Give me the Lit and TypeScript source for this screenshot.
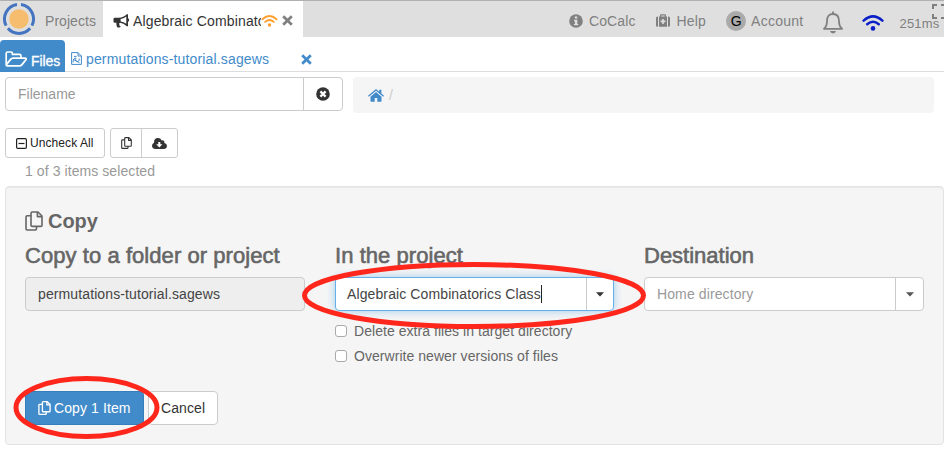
import { LitElement, html, svg, css } from "lit";
import { customElement } from "lit/decorators.js";

const icon = (cls: string, w: number, h: number, box: string, body: unknown) =>
  html`<svg class="icon ${cls}" width=${w} height=${h} viewBox=${box} aria-hidden="true">${body}</svg>`;

const copyIcon = (w: number, h: number, sw: number) =>
  icon("", w, h, "0 0 18 20", svg`
    <g fill="none" stroke="currentColor" stroke-width=${sw} stroke-linejoin="round">
      <path d="M6.2 4.8H2.2Q1 4.8 1 6V17.8Q1 19 2.2 19H10.3Q11.5 19 11.5 17.8V15.4"/>
      <path d="M7.2 1H13L17 5V14.2Q17 15.4 15.8 15.4H7.2Q6 15.4 6 14.2V2.2Q6 1 7.2 1Z"/>
      <path d="M12.4 1V5.6H17"/>
    </g>`);

const wifi = (cls: string, w: number, h: number) =>
  icon(cls, w, h, "0 0 22 16", svg`
    <g fill="none" stroke="currentColor" stroke-width="2.5" stroke-linecap="round">
      <path d="M1.6 5.6Q11 -2.8 20.4 5.6"/>
      <path d="M5.2 9.2Q11 4.2 16.8 9.2"/>
    </g>
    <circle cx="11" cy="13.4" r="2.3" fill="currentColor"/>`);

const cross = (cls: string, s: number) =>
  icon(cls, s, s, "0 0 10 10", svg`<path d="M1.1 1.1L8.9 8.9M8.9 1.1L1.1 8.9" stroke="currentColor" stroke-width="2.5"/>`);

@customElement("top-bar")
export class TopBar extends LitElement {
  static styles = css`
    :host { display: flex; height: 37px; box-sizing: border-box; border-top: 1px solid #b0b0b0;
      background: #dfdfdf; color: #808080; font-size: 14px; line-height: 40px; }
    .icon { display: block; flex: none; }
    .brand { display: flex; width: 103px; }
    .logo { margin: 1px 0 0 2px; }
    .projects { margin-left: 9px; letter-spacing: .05px; }
    .tab { display: flex; width: 200px; background: #fff; color: #333; white-space: nowrap; }
    .horn { margin: 13px 0 0 10px; }
    .title { width: 128px; margin-left: 4px; overflow: hidden; letter-spacing: .15px; }
    .orange { color: #ff9f2e; margin-top: 14px; }
    .close { color: #808080; margin: 14px 0 0 4px; }
    .right { display: flex; flex: 1; padding-left: 266px; position: relative; white-space: nowrap; }
    .info { margin: 13px 6px 0 0; }
    .cocalc { letter-spacing: .1px; }
    .kit { margin: 13px 7px 0 20px; }
    .help { letter-spacing: .2px; }
    .avatar { width: 20px; height: 20px; line-height: 20px; margin: 10px 5px 0 20px; border-radius: 50%;
      background: #aaa; color: #000; text-align: center; }
    .account { letter-spacing: .25px; }
    .bell { margin: 10px 0 0 20px; }
    .blue { color: #0a1fc8; margin: 14px 0 0 19px; }
    .ping { margin-left: 15px; line-height: 46px; font-size: 13px; letter-spacing: .2px; }
    .expand { position: absolute; top: 3px; right: 0; }
  `;
  render() {
    return html`
      <div class="brand">
        ${icon("logo", 34, 34, "0 0 34 34", svg`
          <circle cx="17" cy="17" r="9.8" fill="#f6bd6f"/>
          <g fill="none" stroke="#4474c0" stroke-width="3">
            <path d="M19 2.6A14.5 14.5 0 0 1 29.9 23.6"/>
            <path d="M28.1 26.3A14.5 14.5 0 0 1 5.9 26.3"/>
            <path d="M4.1 23.6A14.5 14.5 0 0 1 15 2.6"/>
          </g>`)}
        <span class="projects">Projects</span>
      </div>
      <div class="tab">
        ${icon("horn", 16, 14, "0 0 16 14", svg`
          <path fill="currentColor" fill-rule="evenodd" d="M15 .2V4.4A1.6 1.6 0 0 1 15 7.6V12.2H13.8Q10.4 9.2 7 8.8Q5.6 9.4 6.5 10.8Q6 11.6 8 12.8Q6.5 14.2 4.2 13.2Q3 10.8 3.5 8.7H1.8Q.5 8.7 .5 7.4V5Q.5 3.7 1.8 3.7H6Q10.4 3.6 13.8 .2ZM13.3 2.6Q10.5 4.8 7.6 5.1V7.4Q10.5 7.7 13.3 9.8Z"/>`)}
        <span class="title">Algebraic Combinatorics</span>
        ${wifi("orange", 17, 12)}${cross("close", 11)}
      </div>
      <div class="right">
        ${icon("info", 14, 14, "0 0 14 14", svg`<circle cx="7" cy="7" r="6.8" fill="currentColor"/>
          <path fill="#dfdfdf" d="M5.8 2.5h2.5v2H5.8zM5 5.8h3.3v4.1h1v1.4H4.9V9.9h1V7.2H5z"/>`)}
        <span class="cocalc">CoCalc</span>
        ${icon("kit", 14, 13, "0 0 14 13", svg`<path fill="currentColor" fill-rule="evenodd" d="M4 2.5V1Q4 .2 5 .2H9Q10 .2 10 1V2.5H11V12.8H3V2.5ZM5.2 2.5H8.8V1.4H5.2ZM6.2 5V6.6H4.6V8.3H6.2V10H7.8V8.3H9.4V6.6H7.8V5ZM2 2.5V12.8H1.5Q0 12.8 0 11.4V4Q0 2.5 1.5 2.5ZM12 2.5V12.8H12.5Q14 12.8 14 11.4V4Q14 2.5 12.5 2.5Z"/>`)}
        <span class="help">Help</span>
        <span class="avatar">G</span>
        <span class="account">Account</span>
        ${icon("bell", 20, 23, "0 0 20 23", svg`
          <path fill="none" stroke="currentColor" stroke-width="1.8" stroke-linejoin="round" d="M1 17.8Q4 15.3 4 10Q4 3 10 3Q16 3 16 10Q16 15.3 19 17.8Z"/>
          <path fill="currentColor" d="M9.1 .4h1.8V3H9.1zM7 20H13Q12.5 22.4 10 22.4Q7.5 22.4 7 20Z"/>`)}
        ${wifi("blue", 22, 16)}
        <span class="ping">251ms</span>
        ${icon("expand", 12, 15, "0 0 12 15", svg`<path fill="none" stroke="currentColor" stroke-width="2" d="M5 1H1V5M9 1H13M1 10V14H5M9 14H13"/>`)}
      </div>`;
  }
}

@customElement("file-tabs")
export class FileTabs extends LitElement {
  static styles = css`
    :host { display: flex; box-sizing: border-box; height: 32px; margin-top: 3px; border-bottom: 1px solid #ddd; color: #428bca; }
    .icon { display: block; flex: none; }
    .files { display: flex; width: 65px; height: 32px; background: #428bca; color: #fff;
      border-radius: 4px 4px 0 0; line-height: 42px; font-size: 14px; }
    .folder { margin: 11px 4px 0 5px; }
    .files span { letter-spacing: -.1px; -webkit-text-stroke: .3px #fff; }
    .page { margin: 12px 4px 0 6px; }
    .name { width: 215px; line-height: 38px; font-size: 14px; letter-spacing: .15px; }
    .x { margin-top: 14px; }
  `;
  render() {
    return html`
      <div class="files">
        ${icon("folder", 22, 16, "0 0 22 16", svg`<path fill="none" stroke="currentColor" stroke-width="1.7" stroke-linejoin="round" d="M1.2 14V2.4Q1.2 1 2.6 1H6Q7.4 1 7.4 2.4V3.4H14.4Q16 3.4 16 5V7M1.2 14Q1.2 14.8 2.2 14.8H14.5Q16 14.8 17 13.6L21 8.6Q21.8 7.2 20 7.2H8Q6.6 7.2 5.6 8.4L1.6 13.4"/>`)}
        <span>Files</span>
      </div>
      ${icon("page", 11, 13, "0 0 11 13", svg`<path fill="none" stroke="currentColor" d="M.6 .6H7L10.4 4V12.4H.6ZM7 .6V4H10.4"/>
        <path fill="none" stroke="currentColor" stroke-width="1" d="M2 10.5Q2.5 5.2 5 6.2Q3.6 9 6.5 9.5Q9 9 8.2 6.5M2.4 7.5L8.5 10.8M3 4.4H5.6"/>`)}
      <span class="name">permutations-tutorial.sagews</span>
      ${cross("x", 11)}`;
  }
}

@customElement("copy-panel")
export class CopyPanel extends LitElement {
  static styles = css`
    :host { display: block; position: relative; box-sizing: border-box; height: 259px; margin: 6px 0 0 5px; padding: 21px 19px 0;
      background: #f5f5f5; border: 1px solid #e3e3e3; border-radius: 4px; box-shadow: inset 0 1px 1px rgba(0,0,0,.05); color: #666; }
    .icon { display: block; flex: none; }
    h3, h4 { margin: 0; font-size: 20px; line-height: 26px; white-space: nowrap; }
    h3 { display: flex; align-items: center; gap: 5px; letter-spacing: -.05px; }
    h4 { font-weight: 400; font-size: 22px; -webkit-text-stroke: .6px #666; line-height: 26px; margin: 9px 0 8px; }
    .wide { letter-spacing: .06px; }
    .cols { display: grid; grid-template-columns: 280px 279px 280px; column-gap: 30px; }
    .field { display: flex; box-sizing: border-box; height: 34px; border: 1px solid #ccc; border-radius: 4px;
      background: #fff; color: #555; font-size: 14px; line-height: 32px; padding-left: 12px; letter-spacing: .11px; }
    .off { background: #eee; color: #444; }
    .focus { padding-left: 11px; border-color: #66afe9; box-shadow: 0 0 8px rgba(102,175,233,.6); color: #444; }
    .hint { color: #999; }
    .text { flex: 1; white-space: nowrap; }
    .caret { display: inline-block; width: 1px; height: 18px; background: #222; vertical-align: -4px; }
    .drop { display: flex; align-items: center; justify-content: center; width: 27px; border-left: 1px solid #ccc; color: #333; }
    .focus .drop { width: 26px; }
    .grey { color: #555; }
    .check { display: flex; align-items: center; gap: 7px; height: 25px; font-size: 14px; white-space: nowrap; letter-spacing: .05px; }
    .checks { padding-top: 7px; }
    .box { width: 12px; height: 12px; box-sizing: border-box; border: 1px solid #aaa; border-radius: 3px; background: #fff; }
    .actions { display: flex; gap: 4px; margin-top: 23px; font-size: 14px; line-height: 32px; }
    .btn { display: flex; align-items: center; box-sizing: border-box; height: 34px; border: 1px solid #ccc; border-radius: 4px;
      background: #fff; color: #333; white-space: nowrap; }
    .primary { width: 119px; padding-left: 12px; gap: 3px; background: #428bca; border-color: #357ebd; color: #fff; letter-spacing: .1px; }
    .cancel { width: 70px; padding-left: 12px; letter-spacing: .1px; }
    .marks { position: absolute; left: -6px; top: -187px; pointer-events: none; }
  `;
  render() {
    const arrow = icon("", 8, 5, "0 0 8 5", svg`<path fill="currentColor" d="M0 .3H8L4 4.6Z"/>`);
    return html`
      <h3>${copyIcon(18, 20, 1.6)}<span>Copy</span></h3>
      <div class="cols">
        <div><h4 class="wide">Copy to a folder or project</h4>
          <div class="field off"><span class="text">permutations-tutorial.sagews</span></div></div>
        <div><h4 class="wide">In the project</h4>
          <div class="field focus"><span class="text">Algebraic Combinatorics Class<i class="caret"></i></span><span class="drop">${arrow}</span></div>
          <div class="checks">
            <div class="check"><i class="box"></i><span>Delete extra files in target directory</span></div>
            <div class="check"><i class="box"></i><span>Overwrite newer versions of files</span></div>
          </div></div>
        <div><h4>Destination</h4>
          <div class="field hint"><span class="text">Home directory</span><span class="drop grey">${arrow}</span></div></div>
      </div>
      <div class="actions">
        <div class="btn primary">${copyIcon(13, 14, 1.9)}<span>Copy 1 Item</span></div>
        <div class="btn cancel">Cancel</div>
      </div>
      <svg class="marks" width="944" height="455" viewBox="0 0 944 455" aria-hidden="true">
        <g fill="none" stroke="#ff261c" stroke-width="5">
          <ellipse cx="474" cy="295.5" rx="169.5" ry="31"/><ellipse cx="86.5" cy="407.5" rx="70.5" ry="29"/>
        </g>
      </svg>`;
  }
}

@customElement("app-root")
export class AppRoot extends LitElement {
  static styles = css`
    :host { display: block; height: 455px; overflow: hidden; background: #fff; font-family: "Liberation Sans", Arial, sans-serif; }
    .icon { display: block; flex: none; }
    .search { display: flex; gap: 10px; padding: 5px 10px 0 5px; font-size: 14px; }
    .input { display: flex; box-sizing: border-box; width: 338px; height: 34px; border: 1px solid #ccc; border-radius: 4px; line-height: 32px; color: #999; }
    .filename { flex: 1; padding-left: 12px; }
    .clear { display: flex; align-items: center; justify-content: center; width: 38px; border-left: 1px solid #ccc; color: #333; }
    .crumbs { display: flex; flex: 1; align-items: center; gap: 5px; height: 36px; padding-left: 15px; background: #f5f5f5; border-radius: 4px; color: #ccc; }
    .home { color: #428bca; }
    .tools { display: flex; gap: 5px; margin: 15px 0 0 5px; font-size: 12px; color: #333; }
    .btn { display: flex; align-items: center; box-sizing: border-box; height: 30px; border: 1px solid #ccc; border-radius: 3px; white-space: nowrap; }
    .uncheck { width: 100px; padding-left: 10px; gap: 3px; color: #222; letter-spacing: .08px; }
    .pair { width: 68px; }
    .half { display: flex; align-items: center; justify-content: center; height: 28px; }
    .first { width: 30px; border-right: 1px solid #ccc; }
    .second { flex: 1; }
    .count { margin: 3px 0 -1px 25px; padding-top: 1px; font-size: 14px; line-height: 19px; color: #999; letter-spacing: .08px; }
  `;
  render() {
    return html`
      <top-bar></top-bar>
      <file-tabs></file-tabs>
      <div class="search">
        <div class="input"><span class="filename">Filename</span><span class="clear">
          ${icon("", 14, 14, "0 0 14 14", svg`<circle cx="7" cy="7" r="6.8" fill="currentColor"/><path d="M4.4 4.4L9.6 9.6M9.6 4.4L4.4 9.6" stroke="#fff" stroke-width="2.2"/>`)}
        </span></div>
        <div class="crumbs">${icon("home", 16, 13, "0 0 16 13", svg`<path fill="currentColor" d="M8 3.1L13.5 7.7V12Q13.5 12.8 12.7 12.8H9.3V9H6.7V12.8H3.3Q2.5 12.8 2.5 12V7.7ZM8 0L11.2 2.7V.8H13.4V4.5L16 6.7L15.2 7.7L8 1.7L.8 7.7L0 6.7Z"/>`)}<span>/</span></div>
      </div>
      <div class="tools">
        <div class="btn uncheck">${icon("", 11, 11, "0 0 11 11", svg`<rect x=".6" y=".6" width="9.8" height="9.8" rx="1.2" fill="none" stroke="currentColor" stroke-width="1.2"/><path d="M2.5 5.5H8.5" stroke="currentColor" stroke-width="1.2"/>`)}<span>Uncheck All</span></div>
        <div class="btn pair"><span class="half first">${copyIcon(11, 12, 1.8)}</span><span class="half second">
          ${icon("", 15, 11, "0 0 15 11", svg`<path fill="currentColor" fill-rule="evenodd" d="M3.4 11Q0 10.8 0 7.8Q0 5.6 2 4.7Q1.8 .2 6 0Q8.7 0 9.7 2.4Q12.7 2 12.4 5Q15 5.6 15 8Q14.8 10.7 12 11ZM6.3 4V6.2H4.2L7.3 9.4L10.4 6.2H8.3V4Z"/>`)}
        </span></div>
      </div>
      <div class="count">1 of 3 items selected</div>
      <copy-panel></copy-panel>`;
  }
}
